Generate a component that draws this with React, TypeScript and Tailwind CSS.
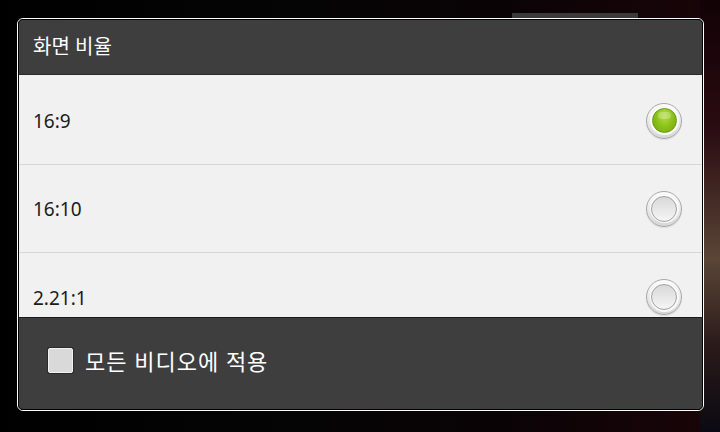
import React from "react";

const font = { fontFamily: '"Noto Sans", "Noto Sans CJK KR", sans-serif' };

function Radio({ checked }: { checked: boolean }) {
  return (
    <div className="w-[36px] h-[36px] rounded-full border border-[#a8a8a8] bg-[linear-gradient(180deg,#fdfdfd,#d6d6d6)] flex items-center justify-center shadow-[0_1px_1px_rgba(0,0,0,0.08)]">
      <div className="w-[29px] h-[29px] rounded-full bg-[#fafafa] flex items-center justify-center">
        {checked ? (
          <div className="w-[25px] h-[25px] rounded-full bg-[radial-gradient(ellipse_at_50%_30%,#b5dd4a_0%,#8fc41c_45%,#6fa40c_100%)] border border-[#6a9a10] relative">
            <div className="absolute left-[5px] top-[3px] w-[13px] h-[7px] rounded-full bg-[rgba(255,255,255,0.25)]" />
          </div>
        ) : (
          <div className="w-[26px] h-[26px] rounded-full border border-[#a0a0a0] bg-[linear-gradient(180deg,#d8d8d8,#f6f6f6)]" />
        )}
      </div>
    </div>
  );
}

function Row({ label, checked, divider }: { label: string; checked: boolean; divider: boolean }) {
  return (
    <div className={`h-[88px] shrink-0 flex items-center justify-between pl-[14px] pr-[20px] ${divider ? "border-b border-[#d6d6d6]" : ""}`}>
      <span className="text-[19px] text-[#1c1c1c] leading-none pt-[2px]">{label}</span>
      <Radio checked={checked} />
    </div>
  );
}

export default function App() {
  return (
    <div
      className="w-[720px] h-[432px] bg-[linear-gradient(90deg,#000_0%,#050505_40%,#0a0306_70%,#1a0508_100%)] relative overflow-hidden"
      style={font}
    >
      <div className="absolute right-0 top-0 w-[20px] h-[432px] bg-[linear-gradient(180deg,#120205_0%,#2a0c12_30%,#5a4536_60%,#2a1a1a_80%,#0a0a12_100%)]" />
      <div className="absolute left-[512px] top-[13px] w-[126px] h-[6px] bg-[#3a3a3a]" />
      <div className="absolute left-[17px] top-[18px] w-[687px] h-[393px] rounded-[6px] border border-white bg-black p-0">
        <div className="w-full h-full rounded-[5px] border border-black overflow-hidden flex flex-col">
          <div className="h-[55px] shrink-0 bg-[#3e3e3e] flex items-center pl-[14px] border-b border-[#2a2a2a]">
            <span className="text-[20px] text-white leading-none">화면 비율</span>
          </div>
          <div className="h-[243px] shrink-0 bg-[#f1f1f1] flex flex-col overflow-hidden pt-[2px] border-b border-[#1a1a1a]">
            <Row label="16:9" checked={true} divider={true} />
            <Row label="16:10" checked={false} divider={true} />
            <Row label="2.21:1" checked={false} divider={false} />
          </div>
          <div className="flex-1 bg-[#3e3e3e] flex items-center pl-[29px] pb-[6px]">
            <div className="w-[25px] h-[25px] rounded-[2px] bg-[#d9d9d9] border border-[#f2f2f2] shadow-[0_0_0_1px_#2a2a2a]" />
            <span className="ml-[12px] text-[22px] tracking-[1px] text-white leading-none">모든 비디오에 적용</span>
          </div>
        </div>
      </div>
    </div>
  );
}
